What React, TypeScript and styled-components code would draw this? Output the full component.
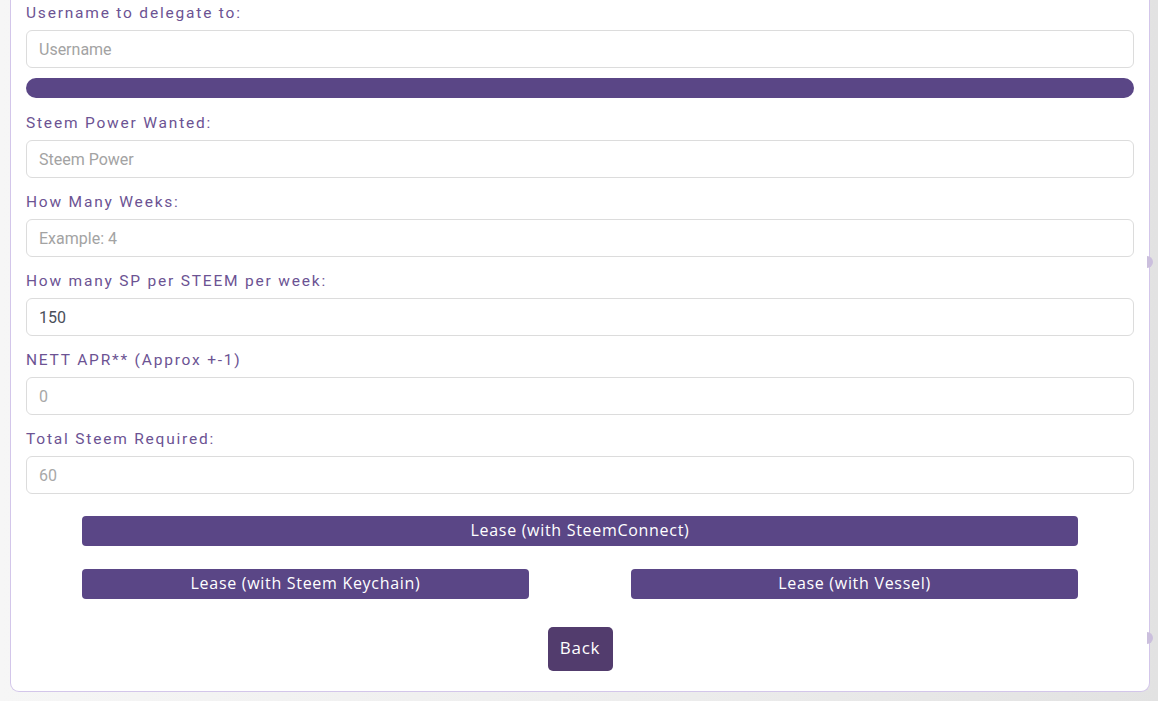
import React from "react";
import styled, { createGlobalStyle } from "styled-components";

const Global = createGlobalStyle`
  html, body { margin: 0; padding: 0; }
  body {
    background: linear-gradient(90deg, #f6f6f6 0%, #ececec 60%, #e2e2e2 100%);
    font-family: Roboto, "Liberation Sans", sans-serif;
    height: 701px;
    overflow: hidden;
  }
`;

const Page = styled.div`
  padding: 0 8px 8px 10px;
  position: relative;
`;

const Card = styled.div`
  background: #fff;
  border: 1px solid #d3c6ea;
  border-top: none;
  border-radius: 0 0 9px 9px;
  padding: 2px 15px 20px 15px;
  display: flex;
  flex-direction: column;
`;

const Group = styled.div`
  display: flex;
  flex-direction: column;
  margin-bottom: 13px;
`;

const Label = styled.label`
  font-family: Roboto, sans-serif;
  font-size: 15.5px;
  line-height: 22px;
  letter-spacing: 1.8px;
  color: #6c5393;
  margin-bottom: 6px;
`;

const Input = styled.input<{ $muted?: boolean }>`
  box-sizing: border-box;
  height: 38px;
  width: 100%;
  border: 1px solid #dcdcdc;
  border-radius: 6px;
  padding: 0 12px;
  font-family: Roboto, "Liberation Sans", sans-serif;
  font-size: 16px;
  color: ${(p) => (p.$muted ? "#a8a8a8" : "#4a4f5a")};
  background: #fff;
  outline: none;
  &::placeholder { color: #a3a3a3; }
`;

const Bar = styled.div`
  height: 20px;
  border-radius: 10px;
  background: #5a4686;
  margin: -3px 0 14px 0;
`;

const Actions = styled.div`
  display: flex;
  flex-direction: column;
  padding: 9px 56px 0 56px;
  gap: 23px;
`;

const Row = styled.div`
  display: flex;
  justify-content: space-between;
`;

const Button = styled.button<{ $half?: boolean }>`
  height: 30px;
  width: ${(p) => (p.$half ? "447px" : "100%")};
  border: none;
  border-radius: 4px;
  background: #5a4686;
  color: #fff;
  font-family: "Open Sans", "Noto Sans", sans-serif;
  font-size: 16px;
  letter-spacing: 0.7px;
  padding: 0 0 2px 0;
  cursor: pointer;
`;

const BackWrap = styled.div`
  display: flex;
  justify-content: center;
  padding-top: 5px;
  margin-top: 23px;
`;

const BackButton = styled.button`
  height: 44px;
  width: 65px;
  border: none;
  border-radius: 5px;
  background: #523c6d;
  color: #fff;
  font-family: "Open Sans", "Noto Sans", sans-serif;
  font-size: 17px;
  letter-spacing: 0.7px;
  padding: 0 0 3px 0;
`;

const Dot = styled.div<{ $top: number }>`
  position: absolute;
  right: 5px;
  top: ${(p) => p.$top}px;
  width: 6px;
  height: 12px;
  border-radius: 0 6px 6px 0;
  background: #cbbfdd;
`;

const fields: { label: string; placeholder?: string; value?: string; muted?: boolean }[] = [
  { label: "Steem Power Wanted:", placeholder: "Steem Power" },
  { label: "How Many Weeks:", placeholder: "Example: 4" },
  { label: "How many SP per STEEM per week:", value: "150" },
  { label: "NETT APR** (Approx +-1)", value: "0", muted: true },
  { label: "Total Steem Required:", value: "60", muted: true },
];

export default function App() {
  return (
    <Page>
      <Global />
      <Dot $top={256} />
      <Dot $top={632} />
      <Card>
        <Group>
          <Label>Username to delegate to:</Label>
          <Input placeholder="Username" />
        </Group>
        <Bar />
        {fields.map((f) => (
          <Group key={f.label}>
            <Label>{f.label}</Label>
            <Input
              placeholder={f.placeholder}
              defaultValue={f.value}
              $muted={f.muted}
              readOnly={f.muted}
            />
          </Group>
        ))}
        <Actions>
          <Button>Lease (with SteemConnect)</Button>
          <Row>
            <Button $half>Lease (with Steem Keychain)</Button>
            <Button $half>Lease (with Vessel)</Button>
          </Row>
        </Actions>
        <BackWrap>
          <BackButton>Back</BackButton>
        </BackWrap>
      </Card>
    </Page>
  );
}
